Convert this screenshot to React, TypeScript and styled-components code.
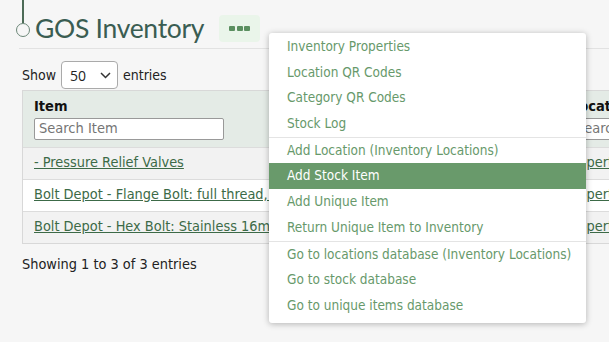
import React from "react";
import styled, { createGlobalStyle } from "styled-components";

const Global = createGlobalStyle`
  html, body { margin: 0; padding: 0; background: #f6f6f6; overflow: hidden; }
  body { font-family: "DejaVu Sans Condensed", "DejaVu Sans", sans-serif; }
`;

const Page = styled.div`
  position: relative;
  width: 609px;
  height: 342px;
  overflow: hidden;
  padding-left: 22px;
  box-sizing: border-box;
`;

const Stem = styled.div`
  position: absolute;
  left: 22px;
  top: 0;
  width: 1.5px;
  height: 23px;
  background: #4d6b57;
`;

const Header = styled.div`
  display: flex;
  align-items: center;
  height: 48px;
  border-bottom: 1px solid #e2e2e2;
  margin-left: -3px;
`;

const Node = styled.span`
  width: 14px;
  height: 14px;
  box-sizing: border-box;
  border: 1.6px solid #6c8778;
  border-radius: 50%;
  background: #f6f6f6;
  margin: 12px 0 0 -3px;
  flex: none;
`;

const Title = styled.h1`
  margin: 8px 0 0 5px;
  font-family: Lato, sans-serif;
  font-weight: 400;
  font-size: 26.5px;
  letter-spacing: -0.3px;
  color: #3a5d52;
`;

const DotsButton = styled.button`
  margin: 9px 0 0 15px;
  width: 41px;
  height: 27px;
  border: none;
  border-radius: 4px;
  background: #eaf5ea;
  display: flex;
  align-items: center;
  justify-content: center;
  gap: 1.5px;
  padding: 0;
`;

const Dot = styled.span`
  width: 6px;
  height: 5px;
  border-radius: 1px;
  background: #5b8f60;
`;

const LengthRow = styled.div`
  display: flex;
  align-items: center;
  gap: 5px;
  margin-top: 12px;
  font-size: 14px;
  color: #222;
`;

const Select = styled.div`
  width: 57px;
  height: 28px;
  border: 1px solid #aaa;
  border-radius: 4px;
  background: #fff;
  box-sizing: border-box;
  display: flex;
  align-items: center;
  justify-content: space-between;
  padding: 0 6px 0 8px;
  font-family: "Open Sans", sans-serif;
  font-size: 14px;
  color: #222;
`;

const Table = styled.div`
  margin-top: 1px;
  width: 620px;
  border: 1px solid #d8d8d8;
  display: grid;
  grid-template-columns: 533px 1fr;
`;

const HeadCell = styled.div<{ $first?: boolean }>`
  height: 56px;
  box-sizing: border-box;
  background: #e4ebe6;
  padding: 7px 0 0 ${(p) => (p.$first ? "11px" : "14px")};
  border-left: ${(p) => (p.$first ? "none" : "1px solid #d0d6d2")};
  font-weight: bold;
  font-size: 14.5px;
  color: #111;
  white-space: nowrap;
  overflow: hidden;
`;

const Search = styled.div<{ $w: number }>`
  margin-top: 4px;
  width: ${(p) => p.$w}px;
  height: 22px;
  box-sizing: border-box;
  border: 1px solid #999;
  border-radius: 2px;
  background: #fff;
  padding: 1px 4px;
  font-weight: normal;
  font-size: 14.5px;
  color: #757575;
`;

const Cell = styled.div<{ $alt?: boolean; $first?: boolean }>`
  height: 32px;
  box-sizing: border-box;
  background: ${(p) => (p.$alt ? "#f2f2f2" : "#fff")};
  border-top: 1px solid #dcdcdc;
  border-left: ${(p) => (p.$first ? "none" : "1px solid #dcdcdc")};
  padding: 6px 0 0 ${(p) => (p.$first ? "11px" : "9px")};
  font-size: 14.4px;
  white-space: nowrap;
  overflow: hidden;
`;

const Link = styled.a`
  color: #3c6a47;
  text-decoration: underline;
`;

const Info = styled.div`
  margin-top: 12px;
  font-size: 14.4px;
  color: #222;
`;

const Menu = styled.div`
  position: absolute;
  left: 269px;
  top: 33px;
  width: 317px;
  background: #fff;
  border-radius: 3px;
  box-shadow: 0 1px 6px rgba(0, 0, 0, 0.28);
  padding: 1px 0 4px;
`;

const Item = styled.div<{ $active?: boolean }>`
  height: 25.7px;
  line-height: 25.7px;
  padding-left: 18px;
  font-size: 13.5px;
  color: ${(p) => (p.$active ? "#fff" : "#67996b")};
  background: ${(p) => (p.$active ? "#699a6b" : "transparent")};
`;

const Divider = styled.div`
  height: 1px;
  background: #e4e4e4;
`;

const rows = [
  "- Pressure Relief Valves",
  "Bolt Depot - Flange Bolt: full thread, Zinc",
  "Bolt Depot - Hex Bolt: Stainless 16mm",
];

export default function App() {
  return (
    <Page>
      <Global />
      <Stem />
      <Header>
        <Node />
        <Title>GOS Inventory</Title>
        <DotsButton>
          <Dot />
          <Dot />
          <Dot />
        </DotsButton>
      </Header>
      <LengthRow>
        Show
        <Select>
          50
          <svg width="11" height="7" viewBox="0 0 11 7">
            <path d="M1 1l4.5 4.5L10 1" fill="none" stroke="#333" strokeWidth="1.5" />
          </svg>
        </Select>
        entries
      </LengthRow>
      <Table>
        <HeadCell $first>
          Item
          <Search $w={190}>Search Item</Search>
        </HeadCell>
        <HeadCell>
          Location
          <Search $w={80}>Search Location</Search>
        </HeadCell>
        {rows.map((r, i) => (
          <React.Fragment key={r}>
            <Cell $first $alt={i % 2 === 0}>
              <Link>{r}</Link>
            </Cell>
            <Cell $alt={i % 2 === 0}>
              <Link>Properties</Link>
            </Cell>
          </React.Fragment>
        ))}
      </Table>
      <Info>Showing 1 to 3 of 3 entries</Info>
      <Menu>
        <Item>Inventory Properties</Item>
        <Item>Location QR Codes</Item>
        <Item>Category QR Codes</Item>
        <Item>Stock Log</Item>
        <Divider />
        <Item>Add Location (Inventory Locations)</Item>
        <Item $active>Add Stock Item</Item>
        <Item>Add Unique Item</Item>
        <Item>Return Unique Item to Inventory</Item>
        <Divider />
        <Item>Go to locations database (Inventory Locations)</Item>
        <Item>Go to stock database</Item>
        <Item>Go to unique items database</Item>
      </Menu>
    </Page>
  );
}
